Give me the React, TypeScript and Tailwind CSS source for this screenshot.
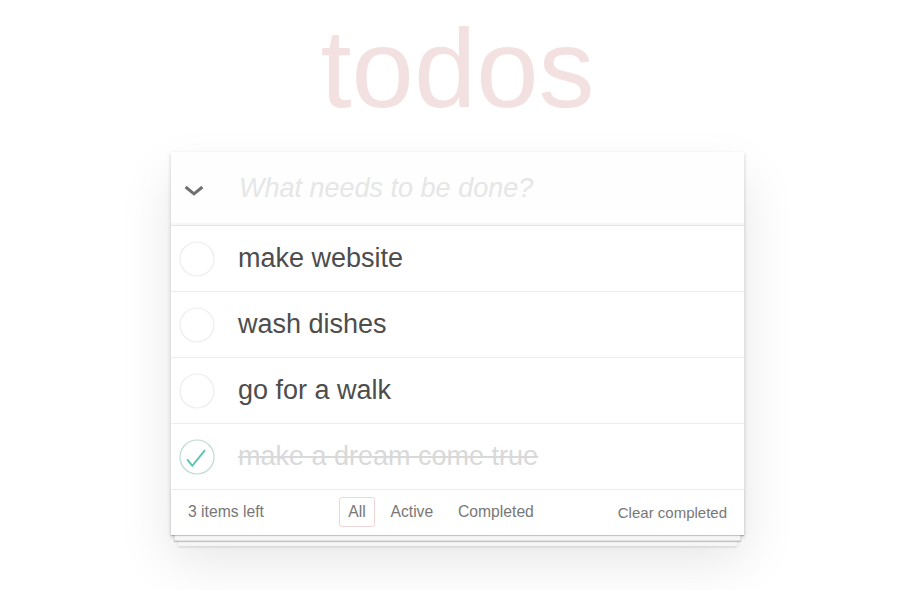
import React from "react";

type Todo = { title: string; done: boolean };

const todos: Todo[] = [
  { title: "make website", done: false },
  { title: "wash dishes", done: false },
  { title: "go for a walk", done: false },
  { title: "make a dream come true", done: true },
];

function Toggle({ done }: { done: boolean }) {
  return (
    <svg width="36" height="36" viewBox="0 0 36 36" className="shrink-0">
      <circle
        cx="18"
        cy="18"
        r="17"
        fill="none"
        stroke={done ? "#bddad5" : "#ededed"}
        strokeWidth="1.2"
      />
      {done && (
        <polyline
          points="8.2,20.3 13.3,26.8 26,11.2"
          fill="none"
          stroke="#5dc2af"
          strokeWidth="1.9"
          strokeLinecap="butt"
          strokeLinejoin="miter"
        />
      )}
    </svg>
  );
}

export default function App() {
  return (
    <div className="min-h-screen bg-white pt-[13px] pr-[5px] font-['Liberation_Sans',Arial,sans-serif]">
      <h1 className="h-[112px] text-center text-[112px] leading-none font-normal text-[rgba(175,47,47,0.15)]">
        todos
      </h1>
      <section className="mx-auto mt-[27px] w-[573px] bg-white shadow-[0_2px_4px_0_rgba(0,0,0,0.2),0_25px_50px_0_rgba(0,0,0,0.1)]">
        <header className="flex h-[73px] items-center bg-[rgba(0,0,0,0.003)] shadow-[inset_0_-2px_1px_rgba(0,0,0,0.03)]">
          <div className="flex w-[68px] shrink-0 items-center pl-[13px] pt-[5px]">
            <svg width="20" height="12" viewBox="0 0 20 12">
              <polyline
                points="1.6,2 10,8.8 18.4,2"
                fill="none"
                stroke="#707070"
                strokeWidth="3"
              />
            </svg>
          </div>
          <span className="text-[27px] italic text-[#e6e6e6]">What needs to be done?</span>
        </header>
        <ul className="border-t border-[#e6e6e6]">
          {todos.map((t) => (
            <li
              key={t.title}
              className="flex h-[66px] items-center border-b border-[#ededed]"
            >
              <div className="flex w-[67px] shrink-0 items-center pl-[8px]">
                <Toggle done={t.done} />
              </div>
              <span
                className={
                  t.done
                    ? "text-[27px] text-[#d9d9d9] line-through"
                    : "text-[27px] text-[#4d4d4d]"
                }
              >
                {t.title}
              </span>
            </li>
          ))}
        </ul>
        <footer className="flex h-[45px] items-center px-[17px] pb-[2px] text-[15.7px] text-[#777] shadow-[0_1px_1px_rgba(0,0,0,0.2),0_9px_0_-3.4px_#f6f6f6,0_10px_1px_-3.4px_rgba(0,0,0,0.2),0_18px_0_-6.7px_#f6f6f6,0_19px_2px_-6.7px_rgba(0,0,0,0.2)]">
          <span>3 items left</span>
          <div className="ml-[72px] flex items-center">
            <span className="m-[3.4px] rounded-[3px] border border-[rgba(175,47,47,0.2)] px-[8px] py-[4px] leading-[20px]">
              All
            </span>
            <span className="m-[3.4px] rounded-[3px] border border-transparent px-[8px] py-[4px] leading-[20px]">
              Active
            </span>
            <span className="m-[3.4px] rounded-[3px] border border-transparent px-[8px] py-[4px] leading-[20px]">
              Completed
            </span>
          </div>
          <span className="ml-auto pt-[3px] text-[15px]">Clear completed</span>
        </footer>
      </section>
    </div>
  );
}
